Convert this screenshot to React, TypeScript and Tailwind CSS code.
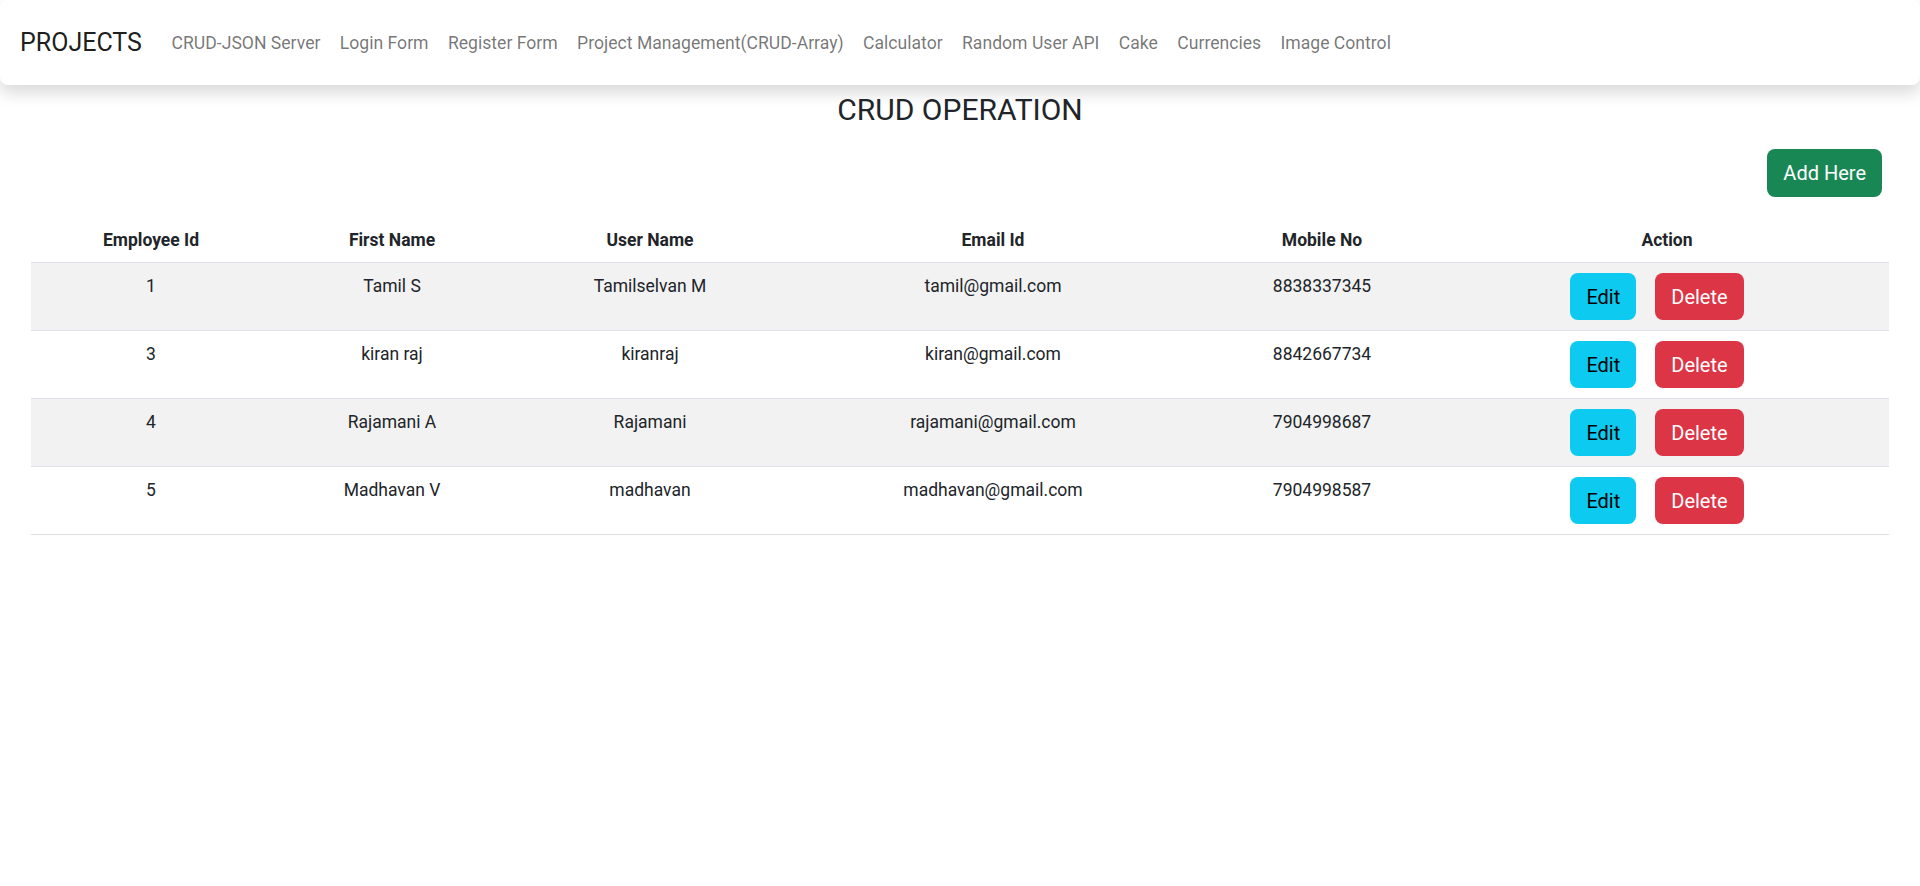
const navLinks = [
  'CRUD-JSON Server',
  'Login Form',
  'Register Form',
  'Project Management(CRUD-Array)',
  'Calculator',
  'Random User API',
  'Cake',
  'Currencies',
  'Image Control',
];

const employees = [
  { id: 1, firstName: 'Tamil S', userName: 'Tamilselvan M', email: 'tamil@gmail.com', mobile: '8838337345' },
  { id: 3, firstName: 'kiran raj', userName: 'kiranraj', email: 'kiran@gmail.com', mobile: '8842667734' },
  { id: 4, firstName: 'Rajamani A', userName: 'Rajamani', email: 'rajamani@gmail.com', mobile: '7904998687' },
  { id: 5, firstName: 'Madhavan V', userName: 'madhavan', email: 'madhavan@gmail.com', mobile: '7904998587' },
];

export default function App() {
  return (
    <div className="min-h-screen bg-white text-[#212529] font-['Roboto',sans-serif]">
      {/* Navbar */}
      <nav className="flex h-[85px] items-center rounded-lg bg-white pl-[20px] shadow-[0_8px_16px_rgba(0,0,0,0.15)]">
        <a className="mr-[20px] text-[25px] leading-[32px] text-black/90">PROJECTS</a>
        <ul className="flex items-center">
          {navLinks.map((link) => (
            <li key={link}>
              <a className="block px-[9.7px] text-[17.6px] leading-[26px] text-black/55">{link}</a>
            </li>
          ))}
        </ul>
      </nav>

      <main>
        <h3 className="mt-[7px] text-center text-[30px] font-normal leading-[36px]">CRUD OPERATION</h3>

        <div className="mt-[21px] flex justify-end pr-[38px]">
          <button className="h-[48px] rounded-lg bg-[#198754] px-4 text-[20px] text-white">Add Here</button>
        </div>

        <div className="mx-[31px] mt-[22px]">
          <table className="w-full table-fixed border-collapse text-center text-[17.5px] leading-[26px]">
            <colgroup>
              <col className="w-[240px]" />
              <col className="w-[242px]" />
              <col className="w-[274px]" />
              <col className="w-[412px]" />
              <col className="w-[246px]" />
              <col />
            </colgroup>
            <thead>
              <tr className="border-b border-[#dee2e6]">
                <th className="pb-[9px] pt-2 font-bold">Employee Id</th>
                <th className="pb-[9px] pt-2 font-bold">First Name</th>
                <th className="pb-[9px] pt-2 font-bold">User Name</th>
                <th className="pb-[9px] pt-2 font-bold">Email Id</th>
                <th className="pb-[9px] pt-2 font-bold">Mobile No</th>
                <th className="pb-[9px] pt-2 font-bold">Action</th>
              </tr>
            </thead>
            <tbody>
              {employees.map((emp, i) => (
                <tr key={emp.id} className={`border-b border-[#dee2e6] ${i % 2 === 0 ? 'bg-[#f2f2f2]' : 'bg-white'}`}>
                  <td className="pt-[10px] align-top">{emp.id}</td>
                  <td className="pt-[10px] align-top">{emp.firstName}</td>
                  <td className="pt-[10px] align-top">{emp.userName}</td>
                  <td className="pt-[10px] align-top">{emp.email}</td>
                  <td className="pt-[10px] align-top">{emp.mobile}</td>
                  <td className="pb-[10px] pt-[10px] align-top">
                    <div className="flex items-center justify-center gap-[19px] pr-5">
                      <button className="h-[47px] rounded-lg bg-[#0dcaf0] px-4 text-[20px] leading-[30px] text-black">Edit</button>
                      <button className="h-[47px] rounded-lg bg-[#dc3545] px-4 text-[20px] leading-[30px] text-white">Delete</button>
                    </div>
                  </td>
                </tr>
              ))}
            </tbody>
          </table>
        </div>
      </main>
    </div>
  );
}
